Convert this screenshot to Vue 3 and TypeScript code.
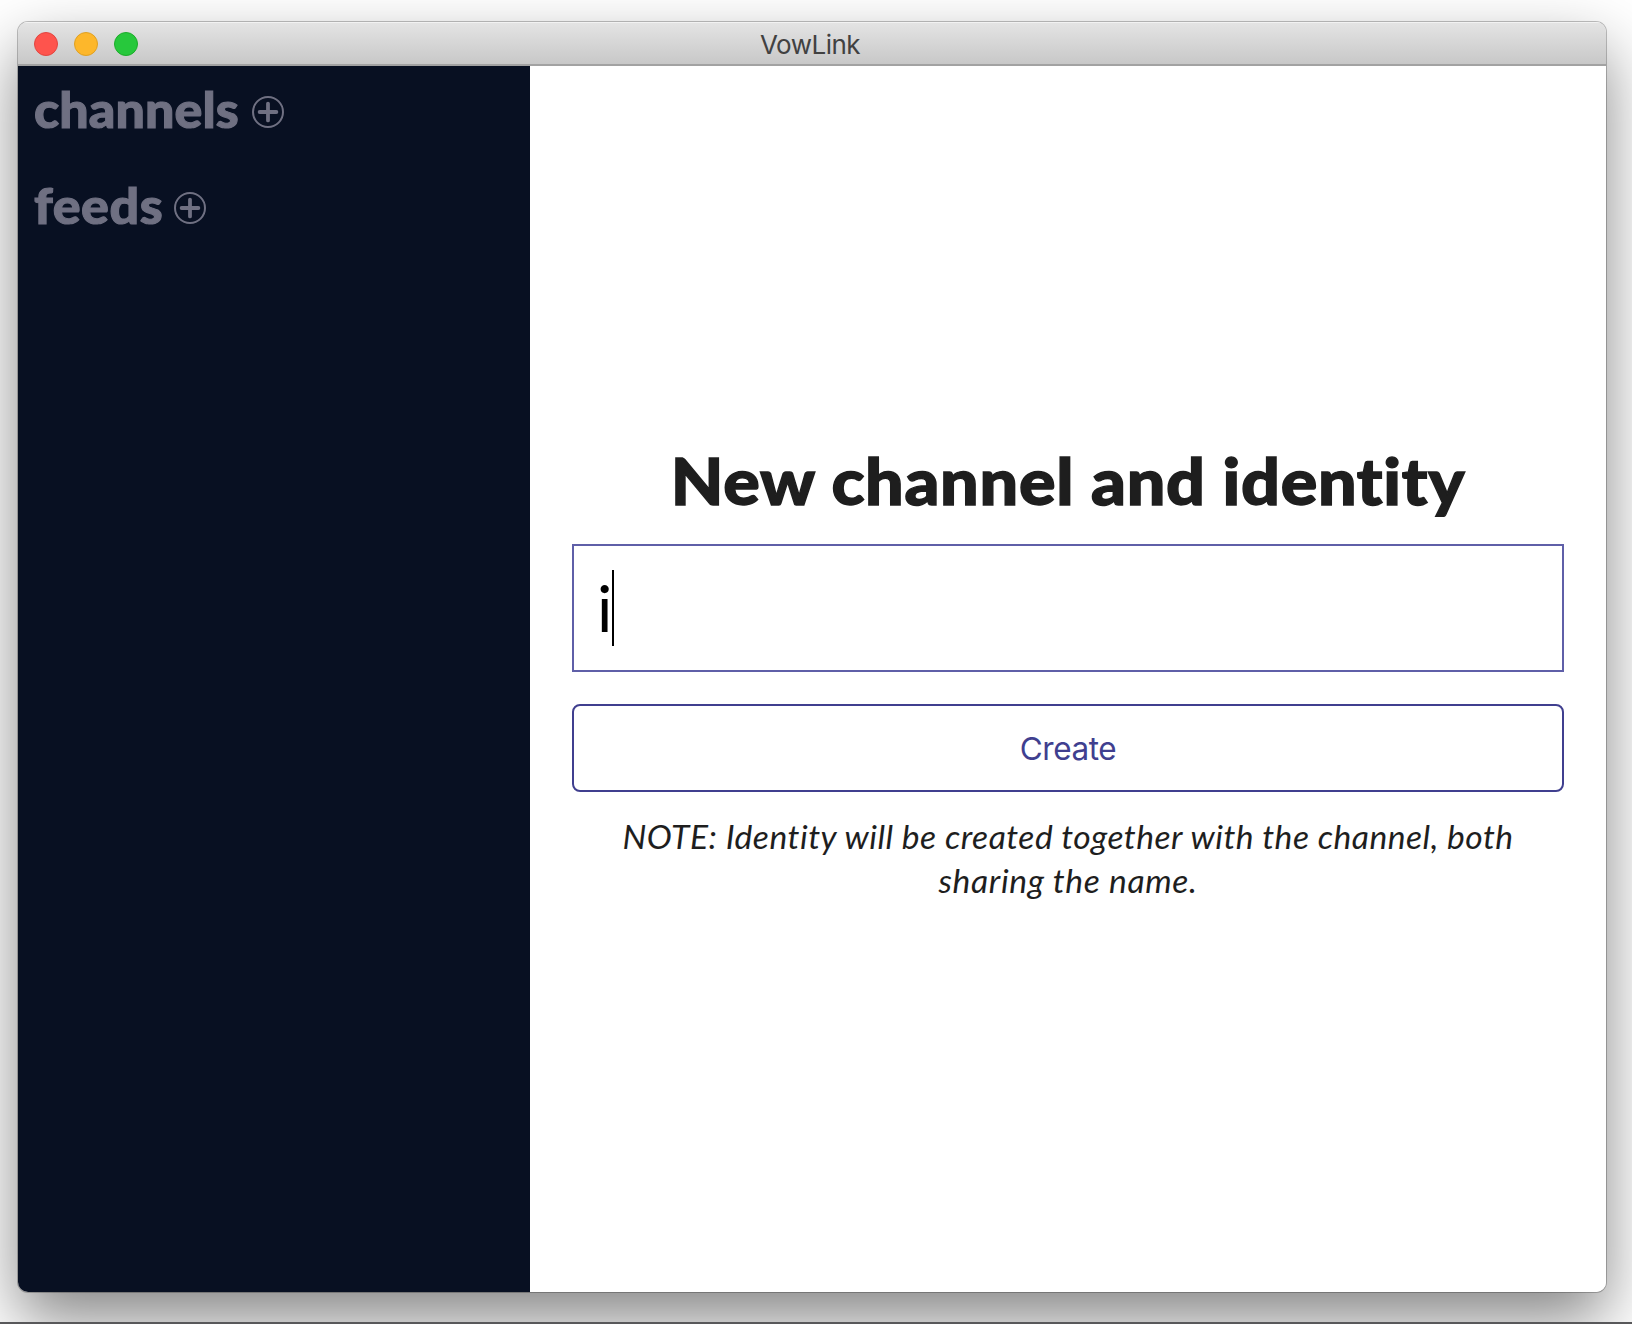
<script setup lang="ts">
import { ref } from 'vue'

const sections = ref<string[]>(['channels', 'feeds'])
const lights: string[] = ['close', 'minimize', 'zoom']
const name = ref('i')
</script>

<template>
  <div class="desktop">
    <div class="window">
      <header class="titlebar">
        <div class="lights">
          <span v-for="l in lights" :key="l" class="light" :class="l"></span>
        </div>
        <span class="title">VowLink</span>
      </header>
      <div class="body">
        <aside class="sidebar">
          <div v-for="s in sections" :key="s" class="section" :class="s">
            <h2>{{ s }}</h2>
            <svg class="add" viewBox="0 0 32 32" width="32" height="32">
              <circle cx="16" cy="16" r="15" fill="none" stroke="currentColor" stroke-width="2" />
              <path d="M16 7.6V24.4M7.6 16H24.4" fill="none" stroke="currentColor" stroke-width="3.8" stroke-linecap="round" />
            </svg>
          </div>
        </aside>
        <main class="main">
          <h1>New channel and identity</h1>
          <div class="field"><span class="value">{{ name }}</span><span class="caret"></span></div>
          <button class="create" type="button">Create</button>
          <p class="note">NOTE: Identity will be created together with the channel, both<br /><span class="second">sharing the name.</span></p>
        </main>
      </div>
    </div>
  </div>
</template>

<style>
body {
  margin: 0;
  background: #fff;
}
</style>

<style scoped>
.desktop {
  box-sizing: border-box;
  width: 1632px;
  height: 1324px;
  padding: 22px 0 0 18px;
  overflow: hidden;
  border-bottom: 2px solid #58585a;
  background: #fff;
}
.window {
  width: 1588px;
  height: 1270px;
  border-radius: 10px;
  overflow: hidden;
  display: flex;
  flex-direction: column;
  box-shadow: 0 0 0 1px rgba(0, 0, 0, 0.24), 0 28px 64px rgba(0, 0, 0, 0.48);
}
.titlebar {
  box-sizing: border-box;
  height: 44px;
  flex: none;
  display: grid;
  grid-template-columns: 1fr auto 1fr;
  align-items: center;
  padding: 0 16px;
  background: linear-gradient(#e4e4e4, #c8c8c8);
  border-bottom: 2px solid #a2a2a2;
  box-shadow: inset 0 1px 0 #f2f2f2;
}
.lights {
  display: flex;
  gap: 16px;
}
.light {
  box-sizing: border-box;
  width: 24px;
  height: 24px;
  border-radius: 50%;
}
.close {
  background: #fe544d;
  border: 1px solid #e14640;
}
.minimize {
  background: #fdb72b;
  border: 1px solid #dfa023;
}
.zoom {
  background: #27c83c;
  border: 1px solid #1dac2b;
}
.title {
  margin-right: 4px;
  padding-top: 2px;
  font: 400 26px/42px Inter, sans-serif;
  letter-spacing: -0.5px;
  color: #414141;
}
.body {
  flex: 1;
  display: flex;
}
.sidebar {
  box-sizing: border-box;
  width: 512px;
  padding: 14px 16px;
  background: #081022;
  color: #6f7082;
}
.section {
  display: flex;
  align-items: center;
  height: 64px;
  margin-bottom: 32px;
  gap: 12px;
}
.section h2 {
  margin: 0;
  padding-bottom: 5px;
  font: 900 49px/59px Lato, sans-serif;
  -webkit-text-stroke: 1.1px currentColor;
  transform: scaleX(1.06);
  transform-origin: left;
}
.channels h2 {
  width: 206px;
  letter-spacing: 0.1px;
}
.feeds h2 {
  width: 128px;
  letter-spacing: 0.5px;
}
.main {
  flex: 1;
  display: flex;
  flex-direction: column;
  justify-content: center;
  padding: 0 42px 17px;
  background: #fff;
  text-align: center;
  color: #1e1e1e;
}
h1 {
  margin: -1px 0 20px;
  font: 900 65px/88px Lato, sans-serif;
  letter-spacing: 0.65px;
  -webkit-text-stroke: 1.4px currentColor;
  white-space: nowrap;
  transform: scaleX(1.05);
}
.field {
  box-sizing: border-box;
  height: 128px;
  border: 2px solid #5f5fa8;
  padding: 0 23px;
  display: flex;
  align-items: center;
  color: #000;
}
.value {
  font: 400 64px/76px Lato, sans-serif;
}
.caret {
  width: 2px;
  height: 76px;
  background: #000;
}
.create {
  height: 88px;
  margin: 32px 0 0;
  padding: 2px 0 0;
  border: 2px solid #403f8f;
  border-radius: 8px;
  background: #fff;
  color: #403f8f;
  font: 400 31.5px/40px Inter, sans-serif;
  letter-spacing: -0.4px;
}
.note {
  margin: 23px 0 1px;
  font: italic 400 32px/44px Lato, sans-serif;
  letter-spacing: 0.46px;
  white-space: nowrap;
  transform: scaleX(1.05);
}
.second {
  letter-spacing: 0.6px;
}
</style>
